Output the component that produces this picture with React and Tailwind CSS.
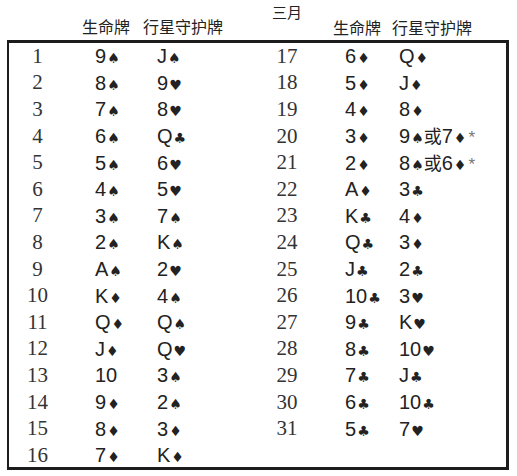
const S = "♠", H = "♥", D = "♦", C = "♣";

const left = [
  [1, "9", S, "J", S],
  [2, "8", S, "9", H],
  [3, "7", S, "8", H],
  [4, "6", S, "Q", C],
  [5, "5", S, "6", H],
  [6, "4", S, "5", H],
  [7, "3", S, "7", S],
  [8, "2", S, "K", S],
  [9, "A", S, "2", H],
  [10, "K", D, "4", S],
  [11, "Q", D, "Q", S],
  [12, "J", D, "Q", H],
  [13, "10", "", "3", S],
  [14, "9", D, "2", S],
  [15, "8", D, "3", D],
  [16, "7", D, "K", D],
];

const right = [
  [17, "6", D, "Q", D],
  [18, "5", D, "J", D],
  [19, "4", D, "8", D],
  [20, "3", D, "alt1"],
  [21, "2", D, "alt2"],
  [22, "A", D, "3", C],
  [23, "K", C, "4", D],
  [24, "Q", C, "3", D],
  [25, "J", C, "2", C],
  [26, "10", C, "3", H],
  [27, "9", C, "K", H],
  [28, "8", C, "10", H],
  [29, "7", C, "J", C],
  [30, "6", C, "10", C],
  [31, "5", C, "7", H],
];

function Card({ v, s }) {
  return (
    <span>
      {v}
      {s && <span className="text-[14px] ml-[1px] font-['DejaVu_Sans',sans-serif]">{s}</span>}
    </span>
  );
}

function Alt({ a, b }) {
  return (
    <span className="whitespace-nowrap">
      <Card v={a[0]} s={a[1]} />
      <span className="text-[18px] font-['Noto_Sans_CJK_SC',sans-serif]">或</span>
      <Card v={b[0]} s={b[1]} />
      <span className="text-[17px] text-[#777] ml-[2px]">*</span>
    </span>
  );
}

function Guard({ row }) {
  if (row[3] === "alt1") return <Alt a={["9", S]} b={["7", D]} />;
  if (row[3] === "alt2") return <Alt a={["8", S]} b={["6", D]} />;
  return <Card v={row[3]} s={row[4]} />;
}

function Rows({ rows, numW, lifeGap, lifeW }) {
  return (
    <div className="flex flex-col">
      {rows.map((r) => (
        <div key={r[0]} className="flex h-[26.6px] items-center">
          <div
            className="text-center text-[21px] font-['Liberation_Serif',serif] text-[#333]"
            style={{ width: numW }}
          >
            {r[0]}
          </div>
          <div
            className="text-[20px] font-['Liberation_Sans',sans-serif]"
            style={{ marginLeft: lifeGap, width: lifeW }}
          >
            <Card v={r[1]} s={r[2]} />
          </div>
          <div className="text-[20px] font-['Liberation_Sans',sans-serif]">
            <Guard row={r} />
          </div>
        </div>
      ))}
    </div>
  );
}

export default function App() {
  return (
    <div className="w-[517px] h-[476px] bg-white text-[#222] font-['Noto_Sans_CJK_SC',sans-serif]">
      <div className="relative h-[40px] text-[16px]">
        <span className="absolute left-[82px] top-[14px]">生命牌</span>
        <span className="absolute left-[143px] top-[14px]">行星守护牌</span>
        <span className="absolute left-[272px] top-[1px] text-[15px]">三月</span>
        <span className="absolute left-[333px] top-[15px]">生命牌</span>
        <span className="absolute left-[392px] top-[15px]">行星守护牌</span>
      </div>
      <div className="ml-[7px] w-[502px] h-[430px] border-t-[3px] border-l-2 border-r-[3px] border-b-[3px] border-[#1c1c1c] flex leading-none">
        <div className="w-[249px]">
          <Rows rows={left} numW={57} lifeGap={29} lifeW={62} />
        </div>
        <div>
          <Rows rows={right} numW={58} lifeGap={29} lifeW={54} />
        </div>
      </div>
    </div>
  );
}
